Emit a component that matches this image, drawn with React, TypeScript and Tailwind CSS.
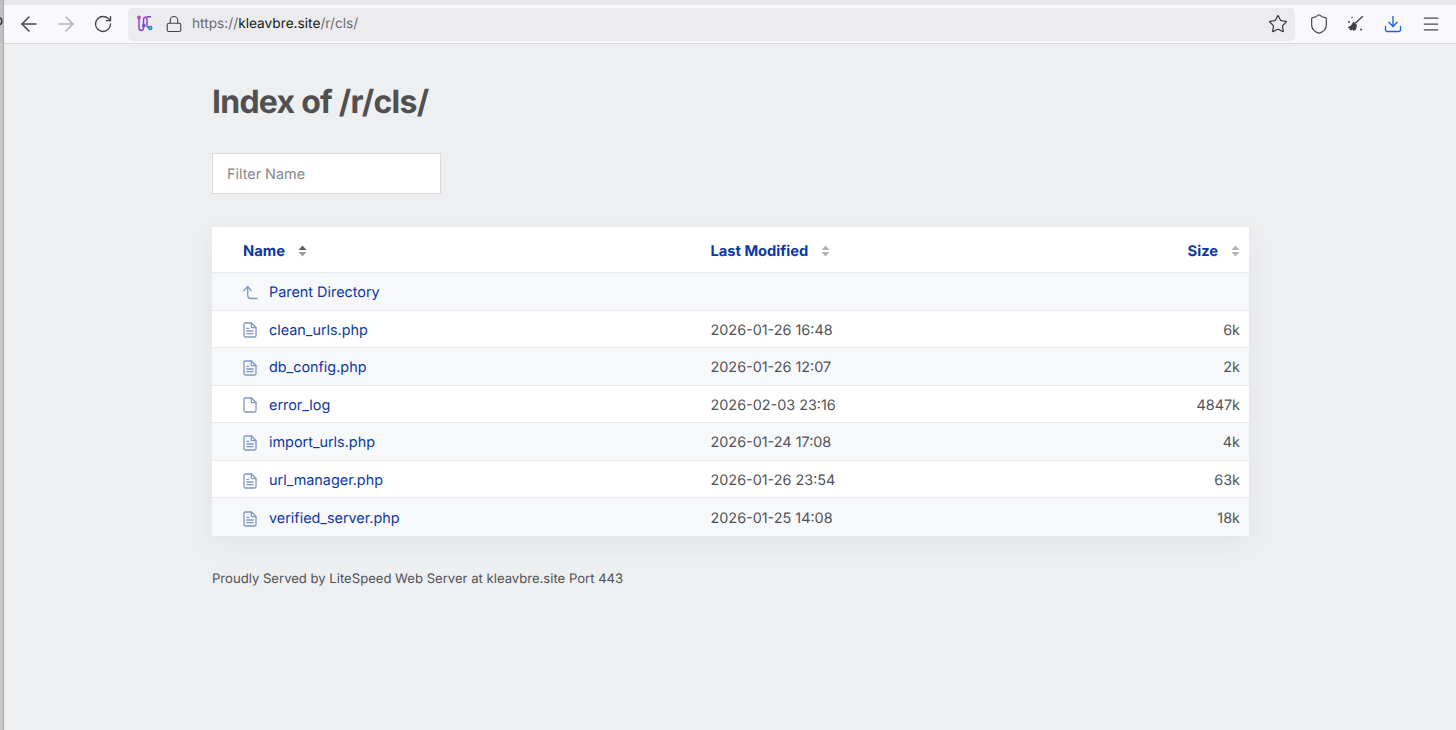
import React from "react";
import { ArrowLeft, ArrowRight, RotateCw, Lock, Star, Shield, Download, Menu } from "lucide-react";

type Row = {
  name: string;
  modified: string;
  size: string;
  icon: "up" | "text" | "blank";
};

const rows: Row[] = [
  { name: "Parent Directory", modified: "", size: "", icon: "up" },
  { name: "clean_urls.php", modified: "2026-01-26 16:48", size: "6k", icon: "text" },
  { name: "db_config.php", modified: "2026-01-26 12:07", size: "2k", icon: "text" },
  { name: "error_log", modified: "2026-02-03 23:16", size: "4847k", icon: "blank" },
  { name: "import_urls.php", modified: "2026-01-24 17:08", size: "4k", icon: "text" },
  { name: "url_manager.php", modified: "2026-01-26 23:54", size: "63k", icon: "text" },
  { name: "verified_server.php", modified: "2026-01-25 14:08", size: "18k", icon: "text" },
];

function FileIcon({ kind }: { kind: Row["icon"] }) {
  if (kind === "up") {
    return (
      <svg width="15" height="15" viewBox="0 0 15 15" fill="none" stroke="#7f98c4" strokeWidth="1.3" strokeLinecap="round" strokeLinejoin="round">
        <path d="M1 5.500 4.700 1.500 8 5.500" />
        <path d="M4.700 2v8.500a3 3 0 0 0 3 3H14" />
      </svg>
    );
  }
  return (
    <svg width="14" height="16" viewBox="0 0 14 16" fill="none" stroke="#7f98c4" strokeWidth="1.3" strokeLinecap="round" strokeLinejoin="round">
      <path d="M2.200 1h6.300L13 5.500v8.300a1.300 1.300 0 0 1-1.300 1.200H2.200A1.300 1.300 0 0 1 1 13.800V2.200A1.300 1.300 0 0 1 2.200 1Z" />
      <path d="M8.300 1v3.400a1.200 1.200 0 0 0 1.200 1.200H13" />
      {kind === "text" && <path d="M3.800 6.300h2M3.800 9h6.400M3.800 11.700h6.400" />}
    </svg>
  );
}

function SortIcon({ active }: { active?: boolean }) {
  return (
    <svg width="9" height="12" viewBox="0 0 9 12" className="shrink-0">
      <path d="M4.500 0.500 8.500 5H0.500Z" fill={active ? "#5f6368" : "#b0b2b6"} />
      <path d="M4.500 11.500 0.500 7H8.500Z" fill={active ? "#9a9c9f" : "#b0b2b6"} />
    </svg>
  );
}

function ExtensionIcon() {
  return (
    <svg width="16" height="18" viewBox="0 0 16 18" fill="none" strokeWidth="1.500" strokeLinecap="round" strokeLinejoin="round">
      <path d="M2 3.500v8.500c0 2 .8 3.500 2.300 3.500S6.500 14 6.500 12.500V5c0-1.500.7-2.800 1.800-2.800S10 3.500 10 5v5.500c0 1.300.7 1.800 1.500 1.800" stroke="#8a45c8" />
      <path d="M10.300 1.800h3" stroke="#7a35e0" />
      <circle cx="2" cy="2.500" r="1.200" stroke="#c23fc0" />
      <circle cx="6.800" cy="10.500" r="1.100" stroke="#6a4fd8" />
      <circle cx="13.300" cy="13" r="1.500" stroke="#1f7fc4" />
    </svg>
  );
}

function BroomIcon() {
  return (
    <svg width="18" height="18" viewBox="0 0 18 18" fill="none">
      <path d="M16.500 1.500 9.500 8" stroke="#3f4145" strokeWidth="1.300" strokeLinecap="round" />
      <path d="M7.500 6.500 11 10l-1 4.500-2.500 1.500-1-1.500-1 1L3 14.500l1-1.500-1.500.5L2 12l3-1.500Z" fill="#3f4145" />
      <circle cx="3" cy="7" r="1" fill="#3f4145" />
      <circle cx="6" cy="2.500" r="0.800" fill="#3f4145" />
      <circle cx="15" cy="14.500" r="1" fill="#3f4145" />
    </svg>
  );
}

export default function App() {
  return (
    <div className="flex h-[730px] w-[1456px] overflow-hidden bg-[#eeeff1] font-['Inter',sans-serif] [text-rendering:geometricPrecision]">
      {/* sliver of the window behind */}
      <div className="flex w-[4px] shrink-0 flex-col border-r border-[#a9a9a6] bg-[#c9c9c5]">
        <div className="flex h-[43px] items-center justify-end overflow-hidden bg-[#c0c0c5] pb-[2px] text-[14px] text-[#17171a]">
          <span className="shrink-0">p</span>
        </div>
      </div>

      <div className="flex min-w-0 flex-1 flex-col">
        <div className="h-[5px] shrink-0 bg-[#e8e8ea]" />
        {/* browser toolbar */}
        <div className="flex h-[39px] shrink-0 items-center border-b border-[#d9d9dc] bg-[#f9f9fb]">
          <div className="flex w-[124px] shrink-0 items-center pl-[13px] text-[#45474b]">
            <ArrowLeft size={24} strokeWidth={1.500} />
            <ArrowRight size={24} strokeWidth={1.500} className="ml-[13px] text-[#b0b1b4]" />
            <RotateCw size={20} strokeWidth={1.600} className="ml-[15px]" />
          </div>
          <div className="flex h-[33px] w-[1167px] items-center rounded-[5px] bg-[#ececee]">
            <div className="ml-[9px] flex w-[16px] justify-center">
              <ExtensionIcon />
            </div>
            <Lock size={18} strokeWidth={1.500} className="ml-[12px] text-[#45474b]" />
            <div className="ml-[9px] flex-1 text-[13.700px] text-[#6a6b70]">
              https://<span className="text-[#17171a]">kleavbre.site</span>/r/cls/
            </div>
            <Star size={20} strokeWidth={1.400} className="mr-[7px] text-[#2f3034]" />
          </div>
          <div className="flex flex-1 items-center text-[#45474b]">
            <Shield size={22} strokeWidth={1.300} className="ml-[13px]" />
            <div className="ml-[16px]">
              <BroomIcon />
            </div>
            <Download size={20} strokeWidth={1.600} className="ml-[19px] text-[#1a62d6]" />
            <Menu size={20} strokeWidth={1.500} className="ml-[18px]" />
          </div>
        </div>

        {/* page */}
        <div className="ml-[208px] w-[1037px]">
          <h1 className="mt-[38px] text-[32px] leading-[40px] font-bold tracking-[-0.75px] text-[#505050]">Index of /r/cls/</h1>
          <div className="mt-[31px] flex h-[41px] w-[229px] items-center border border-[#dcdcde] bg-white pt-[2px] pl-[14px] text-[14.400px] text-[#85878a]">
            Filter Name
          </div>

          <div className="mt-[33px] bg-white shadow-[0_8px_24px_rgba(40,50,70,0.06)]">
            <div className="flex h-[46px] items-center border-b border-[#e9ebee] pt-[3px] text-[14.700px] font-bold text-[#0b37a3]">
              <div className="flex w-[498.500px] items-center pl-[31px]">
                Name
                <span className="ml-[13px]">
                  <SortIcon active />
                </span>
              </div>
              <div className="flex flex-1 items-center">
                Last Modified
                <span className="ml-[13px]">
                  <SortIcon />
                </span>
              </div>
              <div className="flex items-center pr-[9px]">
                Size
                <span className="ml-[13px]">
                  <SortIcon />
                </span>
              </div>
            </div>
            {rows.map((row, i) => (
              <div
                key={row.name}
                className={`flex h-[37.570px] items-center pt-[3px] text-[14.400px] ${i % 2 === 0 ? "bg-[#f7f8fa]" : "bg-white"} ${i < rows.length - 1 ? "border-b border-[#e9ebee]" : ""}`}
              >
                <div className="flex w-[498.500px] items-center pl-[31px] text-[#0b37a3]">
                  <span className="flex w-[26px] shrink-0">
                    <FileIcon kind={row.icon} />
                  </span>
                  {row.name}
                </div>
                <div className="flex-1 text-[#505256]">{row.modified}</div>
                <div className="pr-[9px] text-[#505256]">{row.size}</div>
              </div>
            ))}
          </div>

          <p className="mt-[35px] text-[13.100px] leading-[16px] text-[#505256]">
            Proudly Served by LiteSpeed Web Server at kleavbre.site Port 443
          </p>
        </div>
      </div>
    </div>
  );
}
